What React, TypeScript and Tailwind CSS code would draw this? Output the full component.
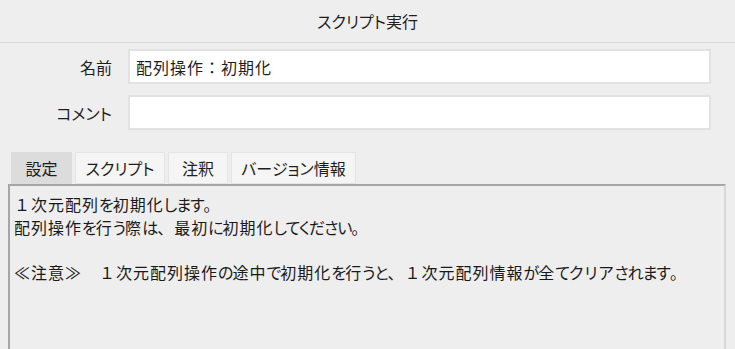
import React from 'react';

const font = "font-['Noto_Sans_CJK_JP','Noto_Sans',sans-serif] [font-feature-settings:'palt']";

const tabs = ['設定', 'スクリプト', '注釈', 'バージョン情報'];
const tabWidths = ['w-[61px]', 'w-[90px]', 'w-[60px]', 'w-[125px]'];

// full-width punctuation/digits keep their full advance (palt would squeeze them);
// hiragana are set tighter, like the narrow UI font in the screenshot
const SPLIT = /([、。：１≪≫　]|[\u3041-\u309f]+)/;
const FULL = /^[、。：１≪≫　]$/;
const KANA = /^[\u3041-\u309f]+$/;

function Jp({ text }: { text: string }) {
  return (
    <>
      {text.split(SPLIT).map((part, i) => {
        if (!part) return null;
        if (FULL.test(part))
          return (
            <span key={i} className="[font-feature-settings:normal]">
              {part}
            </span>
          );
        if (KANA.test(part))
          return (
            <span key={i} className="tracking-[-1px]">
              {part}
            </span>
          );
        return <React.Fragment key={i}>{part}</React.Fragment>;
      })}
    </>
  );
}

function FieldRow({ label, value }: { label: string; value?: string }) {
  return (
    <div className="flex items-center">
      <div className="w-[112px] text-right text-[16px] text-[#1e1e1e]">{label}</div>
      <div className="ml-[16px] w-[583px] h-[35px] bg-white border-2 border-[#e2e2e2] flex items-center px-[6px] text-[16px] tracking-[1px] text-[#1e1e1e]">
        {value && <Jp text={value} />}
      </div>
    </div>
  );
}

export default function App() {
  return (
    <div className={`w-[735px] h-[349px] overflow-hidden bg-[#eeeeee] ${font}`}>
      <div className="h-[43px] flex items-center justify-center border-b border-[#dcdcdc] text-[16px] text-[#1e1e1e]">
        スクリプト実行
      </div>

      <div className="pt-[6px] flex flex-col gap-[11px]">
        <FieldRow label="名前" value="配列操作：初期化" />
        <FieldRow label="コメント" />
      </div>

      <div className="mt-[22px] ml-[11px] flex gap-[2px]">
        {tabs.map((t, i) => (
          <div
            key={t}
            className={`${tabWidths[i]} h-[32px] flex items-center justify-center text-[16px] text-[#1e1e1e] ${
              i === 0 ? 'bg-[#dcdcdc]' : 'bg-[#f5f5f5] border border-[#e4e4e4] ml-px'
            }`}
          >
            {t}
          </div>
        ))}
      </div>

      <div className="ml-[8px] w-[718px] h-[170px] border-t-2 border-l-2 border-r-2 border-t-[#a6a6a6] border-l-[#a6a6a6] border-r-[#d9d9d9] pt-[7px] pl-[4px] text-[16px] tracking-[1px] leading-[22.5px] text-[#1a1a1a]">
        <p><Jp text="１次元配列を初期化します。" /></p>
        <p><Jp text="配列操作を行う際は、最初に初期化してください。" /></p>
        <p>&nbsp;</p>
        <p><Jp text="≪注意≫　１次元配列操作の途中で初期化を行うと、１次元配列情報が全てクリアされます。" /></p>
      </div>
    </div>
  );
}
